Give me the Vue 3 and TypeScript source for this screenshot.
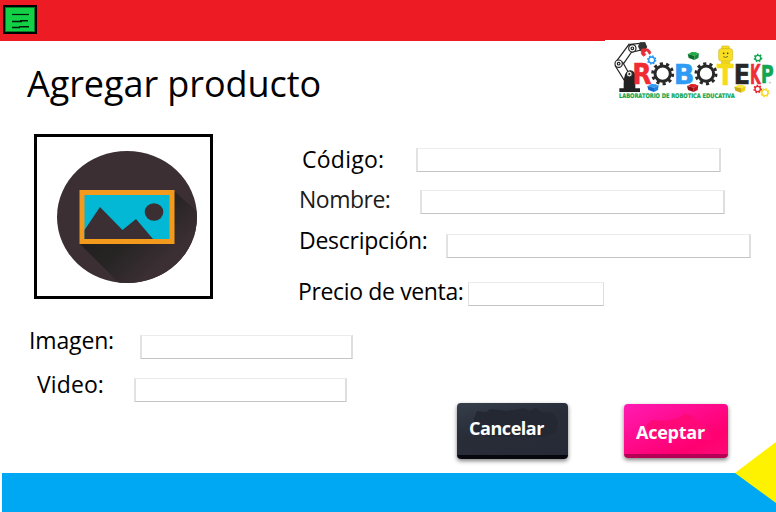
<script setup lang="ts">
import { reactive } from 'vue'

interface Field {
  key: string
  label: string
}

interface Gear {
  x: number
  y: number
  r: number
  color: string
}

interface Cube {
  x: number
  y: number
  top: string
  left: string
  right: string
}

const productFields: Field[] = [
  { key: 'codigo', label: 'Código:' },
  { key: 'nombre', label: 'Nombre:' },
  { key: 'descripcion', label: 'Descripción:' },
  { key: 'precio', label: 'Precio de venta:' },
]

const mediaFields: Field[] = [
  { key: 'imagen', label: 'Imagen:' },
  { key: 'video', label: 'Video:' },
]

const form = reactive<Record<string, string>>({
  codigo: '',
  nombre: '',
  descripcion: '',
  precio: '',
  imagen: '',
  video: '',
})

const smallGears: Gear[] = [
  { x: 140, y: 66, r: 9, color: '#2196f3' },
  { x: 459, y: 60, r: 8, color: '#0da64f' },
  { x: 458, y: 153, r: 8, color: '#e8232b' },
  { x: 480, y: 164, r: 9, color: '#f7d921' },
]

const cubes: Cube[] = [
  { x: 144, y: 150, top: '#2f9bf5', left: '#1469c7', right: '#1f83e6' },
  { x: 265, y: 54, top: '#1fae45', left: '#0b6d2a', right: '#108a36' },
  { x: 263, y: 150, top: '#e02028', left: '#8c0d12', right: '#b8151b' },
  { x: 405, y: 152, top: '#fbe63c', left: '#c9ac10', right: '#ecd01c' },
]
</script>

<template>
  <div class="screen">
    <header class="topbar">
      <button class="menu" type="button" aria-label="Menú">
        <svg width="28" height="23" viewBox="0 0 28 23" fill="none" stroke="#021a06">
          <path d="M6 6.500H23" stroke-width="1.200" />
          <path d="M6 13.500H16M14 12.700H22" stroke-width="1.400" />
          <path d="M6 19.500H14M13 18.700H23" stroke-width="1.600" />
        </svg>
      </button>
    </header>

    <div class="heading">
      <h1>Agregar producto</h1>
      <svg class="logo" width="171" height="62" viewBox="0 6 513 186">
        <rect x="0" y="6" width="513" height="186" fill="#fff" />
        <g fill="#fff" stroke="#222" stroke-width="3.500">
          <path d="M34 70L72 19L84 36L52 82Z" />
          <path d="M31 84L64 137L82 124L53 73Z" />
          <path d="M76 19L119 15L121 33L82 42Z" />
          <circle cx="82" cy="31" r="11" />
          <circle cx="41" cy="77" r="11" />
          <circle cx="82" cy="31" r="4" />
          <circle cx="41" cy="77" r="4" />
        </g>
        <path d="M105 13H120L127 27L118 38H105L99 25Z" fill="#333" />
        <path d="M110 33Q105 50 117 55L123 49L117 44L126 38L133 49L138 45Q134 31 122 32Z" fill="#e52c35" stroke="#e52c35" stroke-width="2" />
        <path d="M43 162V151H56V136Q57 98 76 97Q90 98 91 115V151H105V162Z" fill="#222" />
        <circle cx="73" cy="108" r="9" fill="#ddd" stroke="#222" stroke-width="3" />
        <circle cx="73" cy="108" r="3" fill="#222" />

        <g class="letters">
          <text x="82" y="138" font-size="86" textLength="58" lengthAdjust="spacingAndGlyphs" fill="#f02b32" stroke="#f02b32">R</text>
          <text x="206" y="137" font-size="77" textLength="62" lengthAdjust="spacingAndGlyphs" fill="#2e9bf5" stroke="#2e9bf5">B</text>
          <text x="336" y="140" font-size="84" textLength="50" lengthAdjust="spacingAndGlyphs" fill="#f5db18" stroke="#f5db18">T</text>
          <text x="386" y="137" font-size="77" textLength="49" lengthAdjust="spacingAndGlyphs" fill="#262626" stroke="#262626">E</text>
          <text x="435" y="138" font-size="78" textLength="32" lengthAdjust="spacingAndGlyphs" fill="#ee2d34" stroke="#ee2d34">K</text>
          <text x="467" y="136" font-size="74" textLength="39" lengthAdjust="spacingAndGlyphs" fill="#12a653" stroke="#12a653">P</text>
        </g>

        <g v-for="x in [173, 303]" :key="x" fill="none" stroke="#292929">
          <circle :cx="x" cy="107" r="23" stroke-width="9" />
          <circle :cx="x" cy="107" r="30" stroke-width="9" stroke-dasharray="9.42 9.42" />
        </g>

        <g v-for="g in smallGears" :key="g.x" fill="none" :stroke="g.color">
          <circle :cx="g.x" :cy="g.y" :r="g.r" stroke-width="4" />
          <circle :cx="g.x" :cy="g.y" :r="g.r + 3" stroke-width="4" stroke-dasharray="4.71 4.71" />
        </g>

        <g v-for="c in cubes" :key="c.x" :transform="`translate(${c.x} ${c.y})`">
          <path d="M-17 -6L-2 -12L17 -8L3 -1Z" :fill="c.top" />
          <path d="M-17 -6L3 -1V12L-14 6Z" :fill="c.left" />
          <path d="M3 -1L17 -8L15 6L3 12Z" :fill="c.right" />
          <ellipse cx="-3" cy="-9" rx="5" ry="3" :fill="c.top" />
          <ellipse cx="6" cy="-8" rx="5" ry="3" :fill="c.top" />
        </g>

        <rect x="350" y="24" width="23" height="10" rx="3" fill="#f7dc20" stroke="#c4a91a" stroke-width="1.500" />
        <rect x="341" y="32" width="42" height="37" rx="7" fill="#f9df22" stroke="#c4a91a" stroke-width="1.500" />
        <rect x="348" y="69" width="28" height="9" fill="#efd21a" />
        <circle cx="356" cy="46" r="2.500" fill="#333" />
        <circle cx="368" cy="46" r="2.500" fill="#333" />
        <path d="M355 56Q362 61 369 55" fill="none" stroke="#333" stroke-width="2" />
        <circle cx="495" cy="134" r="2" fill="none" stroke="#777" />

        <text class="tagline" x="42" y="181" textLength="347" lengthAdjust="spacingAndGlyphs">LABORATORIO DE ROBOTICA EDUCATIVA</text>
      </svg>
    </div>

    <main class="content">
      <section class="media">
        <div class="preview">
          <svg width="142" height="134" viewBox="0 0 142 134">
            <defs>
              <linearGradient id="shade" gradientUnits="userSpaceOnUse" x1="55" y1="65" x2="103" y2="117">
                <stop offset="0" stop-color="#211f1f" />
                <stop offset="0.45" stop-color="#272424" />
                <stop offset="1" stop-color="#3b2f34" />
              </linearGradient>
              <clipPath id="disc"><ellipse cx="71" cy="67" rx="70" ry="66" /></clipPath>
            </defs>
            <ellipse cx="71" cy="67" rx="70" ry="66" fill="#3b2f34" />
            <path d="M24 94L118 41L142 62V134H64Z" fill="url(#shade)" clip-path="url(#disc)" />
            <rect x="23.500" y="40" width="95" height="54" fill="#f39a1d" />
            <rect x="28.500" y="45" width="85" height="44" fill="#02b8d5" />
            <path d="M28.500 89V80L44 57L66.500 80L80 69L97 89Z" fill="#3b2f34" />
            <ellipse cx="98" cy="62" rx="9.300" ry="8.700" fill="#3b2f34" />
          </svg>
        </div>
        <label v-for="f in mediaFields" :key="f.key" class="row" :class="f.key">
          <span class="caption">{{ f.label }}</span>
          <input v-model="form[f.key]" type="text" />
        </label>
      </section>

      <section class="details">
        <label v-for="f in productFields" :key="f.key" class="row" :class="f.key">
          <span class="caption">{{ f.label }}</span>
          <input v-model="form[f.key]" type="text" />
        </label>
        <div class="actions">
          <button class="btn cancel" type="button">
            <svg class="smudge" width="110" height="52" viewBox="0 0 110 52">
              <path d="M17 15L20 8L29 9L34 6L50 8L57 7L67 5L72 8L79 5L85 9L96 10L101 18L99 29L86 34H30L17 28Z" fill="#242832" />
            </svg>
            <span>Cancelar</span>
          </button>
          <button class="btn accept" type="button">
            <svg class="smudge" width="104" height="50" viewBox="0 0 104 50">
              <path d="M22 21L28 16L43 17L54 14L61 10L69 12L75 19L84 23L88 36L25 34Z" fill="#ff0877" />
            </svg>
            <span>Aceptar</span>
          </button>
        </div>
      </section>
    </main>

    <footer class="bottombar">
      <svg class="corner" width="41" height="61" viewBox="0 0 41 61">
        <path d="M0 31L41 0V61Z" fill="#fff200" />
      </svg>
    </footer>
  </div>
</template>

<style>
body {
  margin: 0;
  background: #fff;
}
</style>

<style scoped>
.screen {
  display: flex;
  flex-direction: column;
  box-sizing: border-box;
  width: 776px;
  height: 512px;
  overflow: hidden;
  background: #fff;
  color: #000;
  font-family: 'Open Sans', 'Noto Sans', sans-serif;
}

.topbar {
  flex: none;
  box-sizing: border-box;
  height: 41px;
  padding: 5px 3px;
  background: #ed1c24;
}

.menu {
  display: block;
  box-sizing: border-box;
  width: 34px;
  height: 29px;
  padding: 0;
  border: 2px solid #000;
  outline: 1px solid #0a7a28;
  outline-offset: -3px;
  background: #12d146;
}

.menu svg {
  display: block;
  margin: 0 0 0 1px;
}

.heading {
  display: flex;
  flex: none;
  justify-content: space-between;
  height: 93px;
}

h1 {
  margin: 17px 0 0 27px;
  font-size: 36px;
  font-weight: 400;
  line-height: 52px;
  letter-spacing: -0.06px;
  white-space: nowrap;
}

.logo {
  margin-top: -1px;
}

.letters {
  stroke-width: 1.5px;
  font-family: 'DejaVu Sans', sans-serif;
  font-weight: 700;
}

.tagline {
  fill: #0da64f;
  stroke: #0da64f;
  stroke-width: 0.6px;
  font-family: 'DejaVu Sans', sans-serif;
  font-size: 19px;
  font-weight: 700;
}

.content {
  display: grid;
  flex: none;
  grid-template-columns: 298px 478px;
  height: 339px;
}

.preview {
  display: flex;
  align-items: center;
  justify-content: center;
  box-sizing: border-box;
  width: 179px;
  height: 165px;
  margin-left: 34px;
  border: 3px solid #000;
}

.preview svg {
  margin: 0 0 0 6px;
}

.row {
  display: flex;
  height: 24px;
}

.caption {
  flex: none;
  box-sizing: border-box;
  font-size: 23px;
  line-height: 24px;
  white-space: nowrap;
}

input {
  flex: none;
  box-sizing: border-box;
  width: 305px;
  height: 24px;
  padding: 0 6px;
  border: solid;
  border-width: 1px 2px 1px 2px;
  border-color: #ececec #dedede #c4c4c4 #e2e2e2;
  outline: 0;
  background: #fff;
  font: 14px 'Open Sans', sans-serif;
}

.media input {
  width: 213px;
}

.media {
  position: relative;
  z-index: 1;
}

.imagen {
  margin-top: 36px;
}

.imagen .caption {
  width: 140px;
  padding-left: 29px;
  margin-top: -7px;
  letter-spacing: -0.15px;
}

.video {
  margin-top: 19px;
}

.video .caption {
  width: 134px;
  padding-left: 37px;
  margin-top: -6px;
  letter-spacing: 0.1px;
}

.details {
  padding-top: 14px;
}

.codigo .caption {
  width: 118px;
  padding-left: 4px;
  margin-top: -1px;
  letter-spacing: 0.25px;
}

.nombre {
  margin-top: 18px;
}

.nombre .caption {
  width: 122px;
  padding-left: 1px;
  margin-top: -3px;
  color: #1c1c1c;
  letter-spacing: -0.5px;
}

.descripcion {
  margin-top: 20px;
}

.descripcion .caption {
  width: 148px;
  padding-left: 1px;
  margin-top: -6px;
  letter-spacing: -0.25px;
}

.precio {
  margin-top: 24px;
}

.precio .caption {
  width: 170px;
  margin-top: -3px;
  letter-spacing: -0.36px;
}

.precio input {
  width: 136px;
  border-width: 1px;
}

.actions {
  display: flex;
  align-items: flex-start;
  gap: 57px;
  margin: 97px 0 0 159px;
}

.btn {
  display: grid;
  box-sizing: border-box;
  padding: 0;
  border: 0;
  border-radius: 4px;
  color: #fff;
  font: 700 18px 'Open Sans', 'Noto Sans', sans-serif;
  text-align: left;
}

.btn > * {
  grid-area: 1 / 1;
}

.btn span {
  padding-left: 12px;
  line-height: 50px;
  letter-spacing: -0.45px;
}

.cancel {
  width: 111px;
  height: 56px;
  border-bottom: 4px solid #06080d;
  background: linear-gradient(165deg, #353e49 0%, #282d38 45%, #262a36 100%);
  box-shadow: 0 2px 4px rgba(0, 0, 0, 0.5);
}

.accept {
  width: 104px;
  height: 54px;
  margin: 1px 0 0 -1px;
  border-bottom: 4px solid #b60055;
  background: linear-gradient(155deg, #ff1bb3 0%, #ff0a8a 45%, #ff0070 75%, #ff0a78 100%);
  box-shadow: 0 2px 4px rgba(0, 0, 0, 0.5);
}

.accept span {
  padding-top: 3px;
  letter-spacing: -0.25px;
}

.bottombar {
  position: relative;
  flex: none;
  height: 39px;
  margin-left: 2px;
  background: #00a8f3;
}

.corner {
  position: absolute;
  right: 0;
  bottom: 9px;
}
</style>
